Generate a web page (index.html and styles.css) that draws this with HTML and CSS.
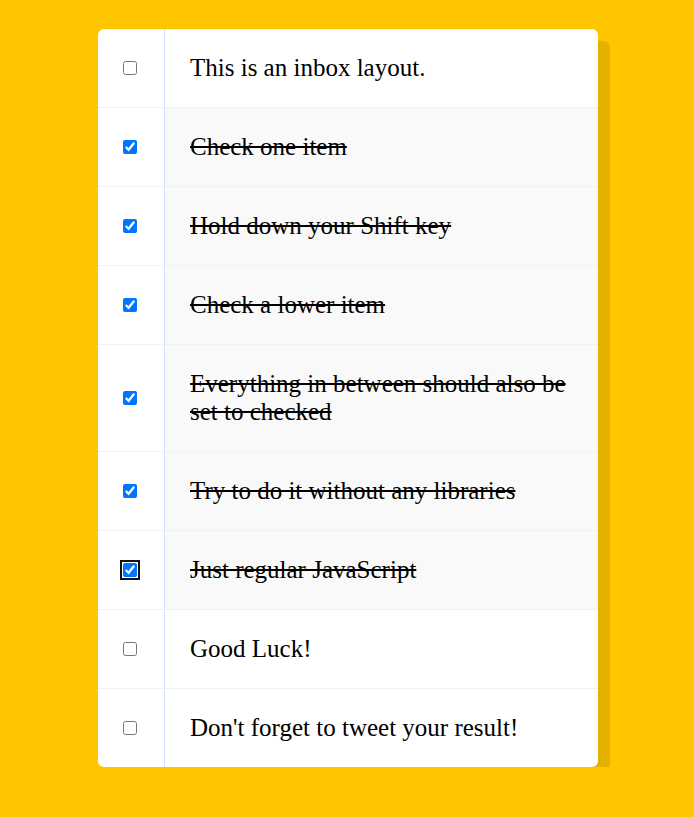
FILE: index.html
```html
<!DOCTYPE html>
<html lang="en">
<head>
<meta charset="utf-8">
<title>Hold Shift to Check Multiple Checkboxes</title>
<link rel="stylesheet" href="styles.css">
</head>
<body>
<div class="inbox">
  <div class="item">
    <input type="checkbox">
    <p>This is an inbox layout.</p>
  </div>
  <div class="item">
    <input type="checkbox" checked>
    <p>Check one item</p>
  </div>
  <div class="item">
    <input type="checkbox" checked>
    <p>Hold down your Shift key</p>
  </div>
  <div class="item">
    <input type="checkbox" checked>
    <p>Check a lower item</p>
  </div>
  <div class="item">
    <input type="checkbox" checked>
    <p>Everything in between should also be set to checked</p>
  </div>
  <div class="item">
    <input type="checkbox" checked>
    <p>Try to do it without any libraries</p>
  </div>
  <div class="item">
    <input type="checkbox" class="focused" checked>
    <p>Just regular JavaScript</p>
  </div>
  <div class="item">
    <input type="checkbox">
    <p>Good Luck!</p>
  </div>
  <div class="item">
    <input type="checkbox">
    <p>Don't forget to tweet your result!</p>
  </div>
</div>
</body>
</html>
```

FILE: styles.css
```css
html {
  background: #ffc600;
  font-family: "Liberation Serif", serif;
}

body {
  margin: 0;
  padding: 29px 0 0 2px;
}

.inbox {
  width: 500px;
  margin: 0 auto;
  background: #ffffff;
  border-radius: 6px;
  box-shadow: 12px 12px 0 rgba(0, 0, 0, 0.1);
  overflow: hidden;
}

.item {
  display: flex;
  align-items: center;
  border-bottom: 1px solid #f1f1f1;
}

.item:last-child {
  border-bottom: 0;
}

.item input[type="checkbox"] {
  width: 14px;
  height: 14px;
  margin: 0 27px 0 25px;
  flex: none;
}

.item input.focused {
  outline: 2px solid #101010;
  outline-offset: 1px;
  border-radius: 3px;
}

.item p {
  flex: 1;
  margin: 0;
  padding: 25px;
  font-size: 25px;
  line-height: 28px;
  color: #000;
  border-left: 1px solid #d1e2ff;
}

.item input:checked + p {
  background: #f9f9f9;
  text-decoration: line-through;
}
```
